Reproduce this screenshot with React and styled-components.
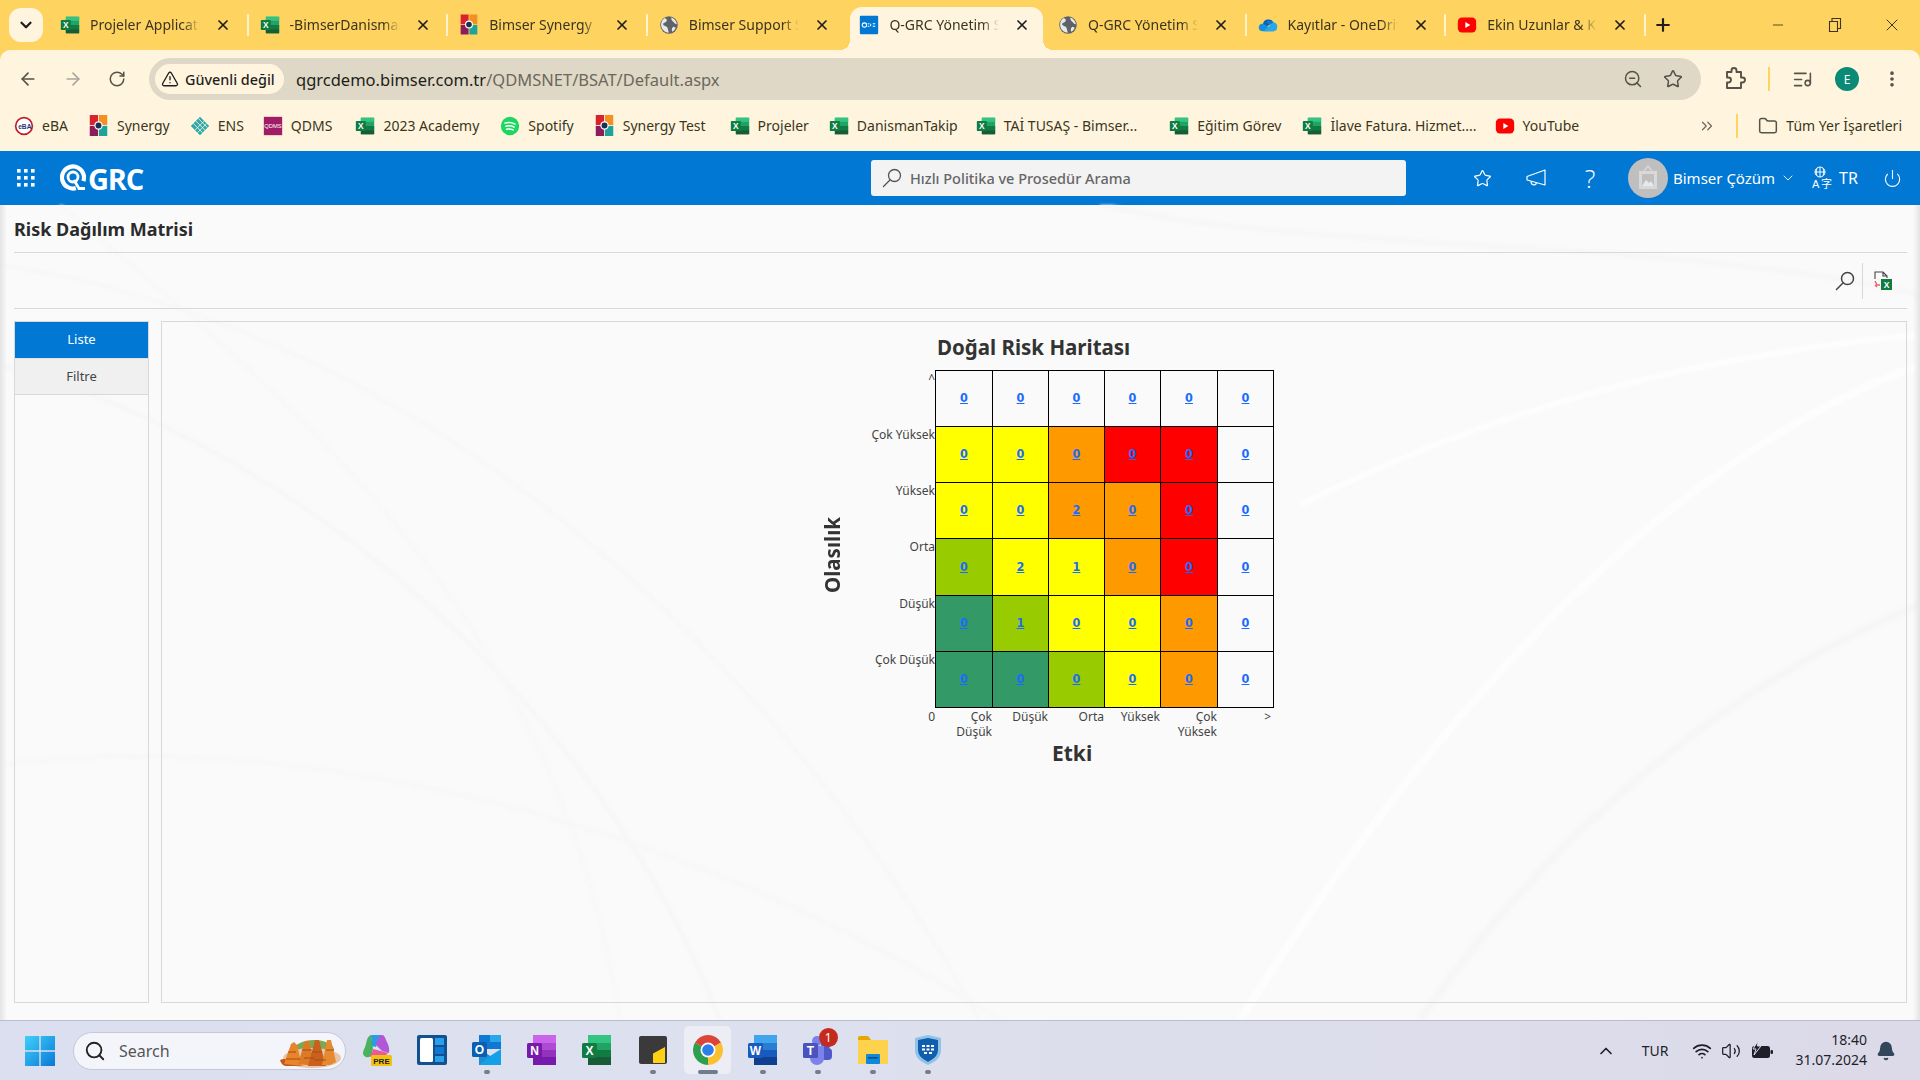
import React from "react";
import styled, { createGlobalStyle } from "styled-components";
import {
  ChevronDown, X, Plus, Minus, ArrowLeft, ArrowRight, RotateCw, TriangleAlert, ZoomOut, Star,
  ListMusic, EllipsisVertical, ChevronsRight, Folder, Search, Power,
  ChevronUp, Wifi, Volume2, Bell,
} from "lucide-react";

const UI = `"Noto Sans", "Open Sans", sans-serif`;

const Global = createGlobalStyle`
  html, body { margin: 0; padding: 0; width: 100%; height: 100%; overflow: hidden; background: #fafafa; }
  #root { width: 1920px; height: 1080px; }
  * { box-sizing: border-box; }
`;

const Screen = styled.div`
  width: 1920px; height: 1080px; display: flex; flex-direction: column; overflow: hidden;
  font-family: ${UI}; background: #ffd35f;
`;

/* ---------- browser tabs ---------- */
const TabStrip = styled.div`
  height: 50px; flex: none; display: flex; align-items: flex-end; padding-left: 9px; background: #ffd35f; position: relative;
`;
const TabMenu = styled.button`
  width: 34px; height: 34px; margin-bottom: 8px; margin-right: 6px; border: 0; border-radius: 12px; background: #fff5df;
  display: flex; align-items: center; justify-content: center; padding: 0; color: #1f1f1f;
`;
const Tab = styled.div`
  width: ${p => (p.$active ? 192.6 : 199.6)}px; height: 43px; flex: none; display: flex; align-items: center;
  margin: ${p => (p.$active ? "0 4px 0 3px" : "0")};
  padding: 0 0 8px ${p => (p.$active ? 9 : 11)}px; position: relative;
  background: ${p => (p.$active ? "#fff5df" : "transparent")};
  border-radius: ${p => (p.$active ? "12px 12px 0 0" : "0")};
  &::before {
    content: ""; position: absolute; left: -10px; bottom: 0; width: 10px; height: 10px;
    background: radial-gradient(circle at 0 0, transparent 10px, #fff5df 10px);
    display: ${p => (p.$active ? "block" : "none")};
  }
  &::after {
    content: ""; position: absolute;
    ${p => (p.$active
      ? `right: -10px; bottom: 0; width: 10px; height: 10px; background: radial-gradient(circle at 100% 0, transparent 10px, #fff5df 10px);`
      : `right: 0; top: 7px; height: 22px; width: 2px; background: #fff1cf;`)}
    display: ${p => (p.$active || p.$sep ? "block" : "none")};
  }
`;
const TabIcon = styled.span`width: 20px; height: 20px; flex: none; display: flex; align-items: center; justify-content: center;`;
const TabTitle = styled.span`
  width: 110px; margin-left: 10px; font-size: 14px; color: #3b3520; white-space: nowrap; overflow: hidden;
  -webkit-mask-image: linear-gradient(90deg, #000 85%, transparent 100%);
`;
const TabClose = styled.span`margin-left: 15px; display: flex; color: #1f1f1f;`;
const NewTab = styled.span`margin: 0 0 7px 7px; display: flex; color: #1f1f1f; align-self: flex-end; height: 36px; align-items: center;`;
const WindowButtons = styled.div`
  margin-left: auto; display: flex; height: 50px; align-self: flex-start; align-items: center; color: #3b3520;
`;
const WindowButton = styled.span`width: 57px; display: flex; justify-content: center;`;

/* ---------- address bar ---------- */
const Toolbar = styled.div`
  height: 50px; flex: none; display: flex; align-items: center; background: #fff5df; padding: 8px 0 0 18px; border-radius: 10px 10px 0 0;
`;
const NavButton = styled.span`
  width: 45px; display: flex; color: ${p => (p.$off ? "#a9a69c" : "#55524a")};
`;
const Omnibox = styled.div`
  width: 1552px; height: 42px; margin-left: -4px; border-radius: 21px; background: #e0d8c6; display: flex; align-items: center; padding: 0 6px;
`;
const SecureChip = styled.div`
  width: 129px; height: 30px; border-radius: 15px; background: #fff5df; display: flex; align-items: center; gap: 6px; padding-left: 6px;
  font-size: 14.4px; font-weight: 500; color: #1f1f1f; white-space: nowrap;
`;
const Url = styled.div`margin-left: 12px; font-size: 16.5px; color: #6c675c; white-space: nowrap;`;
const Host = styled.span`color: #201e18;`;
const OmniIcons = styled.div`margin-left: auto; display: flex; align-items: center; gap: 20px; padding-right: 12px; color: #55524a;`;
const ToolIcons = styled.div`display: flex; align-items: center; color: #55524a; margin-left: 23px;`;
const ToolSep = styled.span`width: 2px; height: 24px; background: #ffd35f; margin: 0 22px 0 22px;`;
const ProfileDot = styled.span`
  width: 24px; height: 24px; border-radius: 50%; background: #0b8a76; color: #fff; font-size: 12px; display: flex; align-items: center; justify-content: center; margin: 0 23px 0 22px;
`;

/* ---------- bookmarks ---------- */
const Bookmarks = styled.div`
  height: 51px; flex: none; display: flex; align-items: center; background: #fff5df; padding: 0 18px 0 14px; font-size: 14px; color: #3b3520;
`;
const Bookmark = styled.span`
  display: flex; align-items: center; gap: 8px; white-space: nowrap; margin-right: ${p => p.$mr}px;
`;
const MoreMarks = styled.span`margin-left: auto; display: flex; color: #6c675c;`;
const MarkSep = styled.span`width: 2px; height: 24px; background: #ffd35f; margin: 0 20px 0 20px;`;

/* ---------- app header ---------- */
const AppHeader = styled.header`
  height: 54px; flex: none; background: #0078d4; display: grid; grid-template-columns: 871px 535px 1fr; align-items: center; color: #fff;
`;
const HeaderLeft = styled.div`display: flex; align-items: center; padding-left: 17px;`;
const Logo = styled.div`display: flex; align-items: center; margin-left: 25px;`;
const LogoWord = styled.span`font: 700 29px/1 "Open Sans", sans-serif; letter-spacing: -1.2px; margin-left: 1px;`;
const SearchBox = styled.div`
  height: 36px; background: #f3f3f3; border-radius: 3px; display: flex; align-items: center; padding-left: 11px; gap: 8px;
  font-size: 14.5px; font-weight: 500; color: #666;
`;
const HeaderRight = styled.div`display: flex; align-items: center; padding-left: 49px;`;
const HeadIcon = styled.span`width: 54px; display: flex; justify-content: center;`;
const HelpMark = styled.span`font: 300 25px/1 "Open Sans", sans-serif;`;
const Avatar = styled.span`
  width: 40px; height: 40px; border-radius: 50%; background: #bfbfbf; display: flex; align-items: center; justify-content: center; margin-left: 11px;
`;
const UserName = styled.span`margin-left: 5px; font-size: 15px; white-space: nowrap; width: 107px;`;
const LangIcon = styled.span`display: flex; margin-left: 16px;`;
const LangText = styled.span`font-size: 16px; margin-left: 5px; width: 20px;`;
const PowerIcon = styled.span`display: flex; margin-left: 24px;`;

/* ---------- page ---------- */
const Content = styled.main`
  flex: 1; min-height: 0; position: relative; padding: 0 13px 17px 14px; display: flex; flex-direction: column; background: #fafafa;
`;
const Waves = styled.svg`position: absolute; inset: 0; width: 100%; height: 100%; pointer-events: none; filter: blur(1.5px);`;
const PageEdge = styled.span`
  position: absolute; top: 0; bottom: 0; width: 7px; ${p => (p.$right ? "right: 0" : "left: 0")};
  background: linear-gradient(${p => (p.$right ? "270deg" : "90deg")}, #e4e4e4, rgba(250,250,250,0));
`;
const PageTitle = styled.h1`
  position: relative; margin: 0; height: 48px; border-bottom: 1px solid #d8d8d8; display: flex; align-items: center;
  font: 700 18px/1 ${UI}; color: #2b2b2b;
`;
const ActionRow = styled.div`
  position: relative; height: 56px; border-bottom: 1px solid #d8d8d8; display: flex; justify-content: flex-end; align-items: center; padding: 0 15px 0 0;
`;
const ActionSep = styled.span`width: 1px; height: 36px; background: #d8d8d8; margin: 0 11px 0 7px;`;
const Body = styled.div`position: relative; flex: 1; min-height: 0; display: flex; gap: 12px; margin-top: 12px;`;
const SideNav = styled.nav`width: 135px; flex: none; border: 1px solid #d8d8d8; display: flex; flex-direction: column;`;
const SideItem = styled.div`
  height: ${p => (p.$active ? 36 : 37)}px; display: flex; align-items: center; justify-content: center; font-size: 13px; padding-bottom: 2px;
  background: ${p => (p.$active ? "#0078d4" : "#f0f0f0")}; color: ${p => (p.$active ? "#fff" : "#444")};
  border-bottom: ${p => (p.$active ? "0" : "1px solid #d8d8d8")};
  border-top: ${p => (p.$active ? "0" : "1px solid #e2e2e2")};
`;
const Panel = styled.section`flex: 1; border: 1px solid #d8d8d8; padding: 11px 0 0 653px;`;

/* ---------- matrix ---------- */
const Chart = styled.div`display: grid; grid-template-columns: 60px 60px 1fr; width: 460px;`;
const ChartTitle = styled.h2`
  grid-column: 3; margin: 0 0 9px 2px; font: 700 20.5px/28px ${UI}; color: #333; white-space: nowrap;
`;
const YTitle = styled.div`
  grid-column: 1; grid-row: 2; align-self: start; justify-self: center; margin-top: 147px; margin-left: -27px; height: 76px;
  writing-mode: vertical-rl; transform: rotate(180deg); font: 700 20.5px/24px ${UI}; color: #333; white-space: nowrap; text-align: center;
`;
const Matrix = styled.div`
  grid-column: 2 / 4; grid-row: 2; display: grid;
  grid-template-columns: 60px 57px 56px 56px 56px 57px 56px;
  grid-template-rows: 56px 56px 56px 57px 56px 56px auto;
`;
const YLabel = styled.span`
  font-size: 12px; line-height: 14px; color: #444; text-align: right; padding: 2px 0 0 0; white-space: nowrap; justify-self: end;
`;
const XLabel = styled.span`
  font-size: 12px; line-height: 15px; color: #444; text-align: right; padding: 2px 0 0 0;
  &:last-child { padding-right: 2px; }
`;
const Cell = styled.div`
  border: 1px solid #000; margin: 0 -1px -1px 0; background: ${p => p.$bg || "transparent"};
  display: flex; align-items: center; justify-content: center;
`;
const CellLink = styled.a`
  font: 700 12.5px/1 "DejaVu Sans Condensed", "DejaVu Sans", sans-serif; color: #1a6bff; text-decoration: underline;
`;
const XTitle = styled.div`
  grid-column: 3; margin: 0 0 0 117px; font: 700 21px/28px ${UI}; color: #333;
`;

/* ---------- taskbar ---------- */
const Taskbar = styled.footer`
  height: 60px; flex: none; display: flex; align-items: center; position: relative; border-top: 1px solid #bdbccd;
  background: linear-gradient(90deg, #dcdfef 0%, #dde0ee 40%, #dcdae9 100%); padding-left: 25px;
`;
const StartButton = styled.span`width: 30px; height: 30px; display: flex; flex: none;`;
const TaskSearch = styled.div`
  width: 273px; height: 38px; margin-left: 18px; flex: none; border-radius: 19px; background: #f4f5fb; border: 1px solid #c6c7d8;
  display: flex; align-items: center; padding-left: 10px; font-size: 16px; color: #555; gap: 13px; position: relative;
`;
const SearchArt = styled.svg`position: absolute; right: 3px; top: 3px;`;
const TaskIcons = styled.div`display: flex; margin: 0 0 2px 3px;`;
const TaskIcon = styled.span`
  width: 55.2px; height: 48px; display: flex; align-items: center; justify-content: center; position: relative; border-radius: 5px;
  &::before {
    content: ""; position: absolute; inset: 0 4px; border-radius: 5px; background: ${p => (p.$active ? "#ecedf5" : "transparent")};
  }
  &::after {
    content: ""; position: absolute; bottom: 0; left: 50%; height: 4px; border-radius: 2px; transform: translateX(-50%);
    width: ${p => (p.$active ? 20 : 6)}px; background: ${p => (p.$active ? "#6e7c8e" : "#777c88")}; display: ${p => (p.$dot || p.$active ? "block" : "none")};
  }
  & > * { position: relative; }
`;
const Badge = styled.span`
  position: absolute !important; top: 2px; right: 8px; width: 19px; height: 19px; border-radius: 50%; background: #c42b1c; color: #fff;
  font-size: 12px; display: flex; align-items: center; justify-content: center;
`;
const Tray = styled.div`margin-left: auto; display: flex; align-items: center; color: #1f1f2a; height: 100%;`;
const TrayText = styled.span`font-size: 14px; margin: 0 24px 0 26px;`;
const TrayIcons = styled.span`display: flex; align-items: center; gap: 9px;`;
const Clock = styled.div`font-size: 14px; line-height: 20px; text-align: right; margin: 0 0 2px 21px;`;
const BellWrap = styled.span`margin: 0 24px 0 9px; display: flex; color: #33475b;`;

/* ---------- small drawn icons ---------- */
const Excel = ({ s = 20 }) => (
  <svg width={s} height={s} viewBox="0 0 24 24">
    <rect x="7" y="2" width="16" height="20" rx="1" fill="#21a366" />
    <rect x="7" y="2" width="16" height="5" fill="#33c481" />
    <rect x="7" y="12" width="16" height="5" fill="#107c41" />
    <rect x="7" y="17" width="16" height="5" fill="#185c37" />
    <rect x="1" y="6" width="12" height="12" rx="1" fill="#107c41" />
    <text x="7" y="15.5" textAnchor="middle" fontSize="10" fontWeight="700" fontFamily="Liberation Sans" fill="#fff">X</text>
  </svg>
);
const Syn = ({ s = 21 }) => (
  <svg width={s} height={s} viewBox="0 0 24 24">
    <rect x="2" y="0" width="9.500" height="11.500" fill="#d8222e" />
    <rect x="12.500" y="0" width="9.500" height="11.500" fill="#f39021" />
    <rect x="2" y="12.500" width="9.500" height="11.500" fill="#8c1d5a" />
    <rect x="12.500" y="12.500" width="9.500" height="11.500" fill="#1ba39c" />
    <circle cx="12" cy="12" r="4.800" fill="#fff" />
    <circle cx="12" cy="12" r="3.400" fill="#1c2f55" />
  </svg>
);
const GlobeIco = ({ s = 20 }) => (
  <svg width={s} height={s} viewBox="0 0 24 24">
    <circle cx="12" cy="12" r="10.500" fill="#5f6368" />
    <path d="M7 3.500c3 1.500 3 3 1.500 4.500S5 9 5 11s4 2 5 4 1 4.500 2 6c-4 .5-9-3-9.500-9C2.500 8 4 5 7 3.500zM15 3c3 1 6 4 6.500 8-2 0-3-1-4-2.500S14 6 15 3zM17 14l3 1c-.5 2-2 4-4 5-1-2-1-4 1-6z" fill="#fff" opacity=".85" />
  </svg>
);
const FavGrc = ({ s = 20 }) => (
  <svg width={s} height={s} viewBox="0 0 24 24">
    <rect x="1" y="1" width="22" height="22" rx="1" fill="#0078d4" />
    <circle cx="6.500" cy="12" r="2.600" fill="none" stroke="#fff" strokeWidth="1.300" />
    <path d="M10.500 10.500h2M10.500 13.500h2M14 10.500v3M16.500 10.500h3M16.500 13.500h3" stroke="#fff" strokeWidth="1.200" />
  </svg>
);
const Cloud = ({ s = 20 }) => (
  <svg width={s} height={s} viewBox="0 0 24 24">
    <path d="M6 11a6.500 6.500 0 0 1 12-2.500 5 5 0 0 1 1 .1L10 14z" fill="#0364b8" />
    <path d="M9.500 8.500 14 12l5-3a5 5 0 0 0-4-2 6 6 0 0 0-5.500 1.500z" fill="#0f78d4" />
    <path d="M6 10.500A4.500 4.500 0 0 0 5 19.500h14L10 12.500z" fill="#1490df" />
    <path d="M18 9a4.500 4.500 0 0 1 5 5.500 5 5 0 0 1-4 5H7l9-9z" fill="#28a8ea" />
  </svg>
);
const Yt = ({ s = 20 }) => (
  <svg width={s} height={s} viewBox="0 0 24 24">
    <rect x="1" y="3" width="22" height="18" rx="5" fill="#f00" />
    <path d="M10 8.500v7l6-3.500z" fill="#fff" />
  </svg>
);
const Eba = () => (
  <svg width={20} height={20} viewBox="0 0 24 24">
    <circle cx="12" cy="12" r="10" fill="#fff" stroke="#c0202a" strokeWidth="2" />
    <text x="13" y="15" textAnchor="middle" fontSize="8" fontWeight="700" fontFamily="Liberation Sans" fill="#1c3a78">eBA</text>
  </svg>
);
const Ens = () => (
  <svg width={20} height={20} viewBox="0 0 24 24">
    <path d="M12 1 23 12 12 23 1 12z" fill="#2fa8a8" />
    <path d="M4 9l11 11M7 6l11 11M10 3l11 11M9 20 20 9M6 17 17 6" stroke="#fff5df" strokeWidth="1" />
  </svg>
);
const Qdms = () => (
  <svg width={20} height={20} viewBox="0 0 24 24">
    <rect x="1" y="1" width="22" height="22" fill="#a01c64" />
    <text x="12" y="14.500" textAnchor="middle" fontSize="7" fontFamily="Liberation Sans" fill="#fff">QDMS</text>
  </svg>
);
const Spotify = () => (
  <svg width={20} height={20} viewBox="0 0 24 24">
    <circle cx="12" cy="12" r="11" fill="#1ed760" />
    <path d="M6 8.500c4-1 8.500-.8 12 1.200M7 12.300c3.500-.8 7.200-.5 10 1M7.800 15.800c3-.6 5.700-.3 8 .9" fill="none" stroke="#fff" strokeWidth="1.800" strokeLinecap="round" />
  </svg>
);
const ExtensionIcon = () => (
  <svg width={22} height={24} viewBox="0 0 22 24" fill="none" stroke="currentColor" strokeWidth="1.900" strokeLinejoin="round">
    <path d="M3 5h4.500V3.500a2.500 2.500 0 0 1 5 0V5H17v5.500h1.500a2.500 2.500 0 0 1 0 5H17V21H3v-5.500h1.500a2.200 2.200 0 0 0 0-5H3z" />
  </svg>
);
const AppGrid = () => (
  <svg width={18} height={18} viewBox="0 0 18 18" fill="#fff">
    {[0, 7, 14].flatMap(y => [0, 7, 14].map(x => <rect key={`${x}-${y}`} x={x} y={y} width="3.600" height="3.600" />))}
  </svg>
);
const Lens = ({ s = 20, color = "#555", w = 1.300 }) => (
  <svg width={s} height={s} viewBox="0 0 20 20" fill="none" stroke={color} strokeWidth={w}>
    <circle cx="12.500" cy="7.500" r="6" />
    <path d="M8.200 11.800 1.500 18.500" strokeLinecap="round" />
  </svg>
);
const Horn = () => (
  <svg width={20} height={18} viewBox="0 0 20 18" fill="none" stroke="#fff" strokeWidth="1.200" strokeLinejoin="round">
    <path d="M19 1v15L1 11V7.500z" />
    <path d="M5 12.500c0 4 5 4.500 5.500 1" />
  </svg>
);
const LangGlyph = () => (
  <svg width={22} height={24} viewBox="0 0 22 24" fill="none" stroke="#fff" strokeWidth="1">
    <circle cx="8" cy="6" r="5" />
    <path d="M3 6h10M8 1v10M5 2.500c-1 2-1 5 0 7M11 2.500c1 2 1 5 0 7" />
    <text x="0" y="22" fontSize="11" fill="#fff" stroke="none" fontFamily="Liberation Sans">A</text>
    <text x="9" y="22" fontSize="11" fill="#fff" stroke="none" fontFamily="Noto Sans CJK SC">字</text>
  </svg>
);
const BatteryIco = () => (
  <svg width={24} height={20} viewBox="0 0 24 20">
    <rect x="2" y="5" width="18" height="12" rx="2.500" fill="#1f1f2a" />
    <rect x="20.500" y="9" width="2.500" height="4" rx="1" fill="#1f1f2a" />
    <path d="M8 0 3 8h3l-2 6 7-9H7.500z" fill="#1f1f2a" stroke="#dcdae9" strokeWidth="1" />
  </svg>
);

const Win = () => (
  <svg width={30} height={30} viewBox="0 0 30 30">
    <defs>
      <linearGradient id="wg" x1="0" y1="0" x2="1" y2="1">
        <stop offset="0" stopColor="#3fd0fb" />
        <stop offset="1" stopColor="#0a78d6" />
      </linearGradient>
    </defs>
    <path d="M0 0h14.300v14.300H0zM15.700 0H30v14.300H15.700zM0 15.700h14.300V30H0zM15.700 15.700H30V30H15.700z" fill="url(#wg)" />
  </svg>
);
const Copilot = () => (
  <svg width={32} height={36} viewBox="0 0 32 36">
    <path d="M10 3c-3 1-4 4-5 9-1 4-3 6-3 9 0 3 3 5 6 4 3-1 3-4 4-9z" fill="#49b35c" />
    <path d="M10 3h11c-2 3-4 6-6 12l-4-1z" fill="#2a9ce0" />
    <path d="M21 3c-3 0-5 5-6 10l6 6 7 2c1-5-1-9-3-13-1-3-2-5-4-5z" fill="#b257d8" />
    <path d="M12 17c4 1 9 2 15 4-2 3-7 5-11 5-3 0-6-1-8-2 2-1 3-3 4-7z" fill="#e85a9b" />
    <rect x="10" y="23" width="21" height="11" rx="1.500" fill="#f4c20d" />
    <text x="20.500" y="32" textAnchor="middle" fontSize="8" fontWeight="700" fontFamily="Liberation Sans" fill="#222">PRE</text>
  </svg>
);
const Widgets = () => (
  <svg width={30} height={30} viewBox="0 0 30 30">
    <rect width="30" height="30" rx="2" fill="#12508f" />
    <rect x="3" y="3" width="13" height="24" rx="1.500" fill="#fff" />
    <rect x="18" y="3" width="9" height="7" fill="#2aa0e8" />
    <rect x="18" y="12" width="9" height="7" fill="#0f78d4" />
    <rect x="18" y="21" width="9" height="6" fill="#2aa0e8" />
  </svg>
);
const Office = ({ letter, tile, c1, c2, c3, c4 }) => (
  <svg width={32} height={30} viewBox="0 0 32 30">
    <rect x="7" y="0" width="23" height="30" rx="1.500" fill={c2} />
    <rect x="7" y="0" width="23" height="8" fill={c1} />
    <rect x="7" y="15" width="23" height="8" fill={c3} />
    <rect x="7" y="22" width="23" height="8" fill={c4} />
    <rect x="1" y="8" width="15" height="15" rx="1.500" fill={tile} />
    <text x="8.500" y="20" textAnchor="middle" fontSize="12" fontWeight="700" fontFamily="Liberation Sans" fill="#fff">{letter}</text>
  </svg>
);
const Outlook = () => (
  <svg width={32} height={30} viewBox="0 0 32 30">
    <rect x="8" y="0" width="22" height="14" fill="#0f78d4" />
    <rect x="19" y="0" width="11" height="7" fill="#28a8ea" />
    <path d="M8 14l11 7 11-7v16H8z" fill="#14a0e6" />
    <path d="M8 14l11 7-11 9z" fill="#1b8ed8" />
    <rect x="1" y="7" width="15" height="15" rx="1.500" fill="#0a5fb0" />
    <text x="8.500" y="19" textAnchor="middle" fontSize="12" fontWeight="700" fontFamily="Liberation Sans" fill="#fff">O</text>
  </svg>
);
const Sticky = () => (
  <svg width={28} height={28} viewBox="0 0 28 28">
    <rect width="28" height="28" rx="2" fill="#3a3a3a" />
    <path d="M14 27V18q0-1 1-1l11-6v16z" fill="#fcd116" />
  </svg>
);
const sector = (a, b, r = 15) => {
  const p = t => [15 + r * Math.cos((t * Math.PI) / 180), 15 + r * Math.sin((t * Math.PI) / 180)];
  const [x1, y1] = p(a), [x2, y2] = p(b);
  return `M15 15L${x1.toFixed(2)} ${y1.toFixed(2)}A${r} ${r} 0 0 1 ${x2.toFixed(2)} ${y2.toFixed(2)}Z`;
};
const Chrome = () => (
  <svg width={30} height={30} viewBox="0 0 30 30">
    <path d={sector(-150, -30)} fill="#db4437" />
    <path d={sector(-30, 90)} fill="#fbc02d" />
    <path d={sector(90, 210)} fill="#2e9e4f" />
    <circle cx="15" cy="15" r="7.500" fill="#fff" />
    <circle cx="15" cy="15" r="5.800" fill="#2f7de9" />
  </svg>
);
const Teams = () => (
  <svg width={32} height={32} viewBox="0 0 32 32">
    <circle cx="24" cy="10" r="5" fill="#5059c9" />
    <rect x="19" y="14" width="11" height="12" rx="4" fill="#5059c9" />
    <circle cx="15" cy="7" r="5" fill="#7b83eb" />
    <path d="M8 12h14v12a7 7 0 0 1-14 0z" fill="#7b83eb" />
    <rect x="1" y="9" width="15" height="15" rx="1.500" fill="#4b53bc" />
    <text x="8.500" y="21" textAnchor="middle" fontSize="12" fontWeight="700" fontFamily="Liberation Sans" fill="#fff">T</text>
  </svg>
);
const Explorer = () => (
  <svg width={30} height={28} viewBox="0 0 30 28">
    <path d="M0 2q0-2 2-2h8l3 4H0z" fill="#e6a800" />
    <rect y="4" width="30" height="24" rx="1" fill="#ffd24d" />
    <rect x="8" y="18" width="14" height="10" rx="1" fill="#0f8ad8" />
    <rect x="10" y="21" width="10" height="1.600" fill="#0a4f8c" />
  </svg>
);
const Shield = () => (
  <svg width={26} height={30} viewBox="0 0 26 30">
    <path d="M13 0 26 3v12c0 8-6 12-13 15C6 27 0 23 0 15V3z" fill="#8fc4e6" />
    <path d="M13 3 23 5v10c0 6-5 9-10 12C8 24 3 21 3 15V5z" fill="#0f5fae" />
    <path d="M7 11h3M11.500 11h3M16 11h3M7 14.500h3M11.500 14.500h3M16 14.500h3M9 18h3M14 18h3" stroke="#fff" strokeWidth="2" />
  </svg>
);
const Carrots = () => (
  <SearchArt width={64} height={32} viewBox="0 0 64 32">
    <ellipse cx="36" cy="14" rx="20" ry="10" fill="#7fa650" />
    <ellipse cx="34" cy="22" rx="29" ry="10" fill="#e8c4a8" />
    <path d="M2 24c8-4 14 4 24 6H8c-3 0-5-3-6-6z" fill="#c2571c" />
    <path d="M6 28 13 8l3-2 3 3 5 21z" fill="#e8842a" />
    <path d="M20 28 27 5h4l6 25z" fill="#dd7a25" />
    <path d="M30 30l7-26h4l7 26z" fill="#c9601c" />
    <path d="M44 29l5-25h4l5 22-6 3z" fill="#e58a30" />
    <path d="M10 16h8M24 14h10M34 16h10M48 14h8M8 23h14M26 22h10M36 24h12" stroke="#a84c14" strokeWidth="1.200" />
  </SearchArt>
);
const QMark = () => (
  <svg width={27} height={30} viewBox="0 0 27 30">
    <circle cx="13" cy="14.500" r="11" fill="none" stroke="#fff" strokeWidth="4.200" strokeDasharray="58 11" transform="rotate(75 13 14.500)" />
    <circle cx="13" cy="14" r="5" fill="none" stroke="#fff" strokeWidth="2.800" />
    <path d="M14 17 L19 25.500 H25" fill="none" stroke="#fff" strokeWidth="2.800" />
  </svg>
);
const Picture = () => (
  <svg width={22} height={26} viewBox="0 0 22 26">
    <path d="M7 6 11 1l4 5" fill="none" stroke="#d9d9d9" strokeWidth="1.300" />
    <rect x="2" y="6" width="18" height="18" fill="#d9d9d9" />
    <rect x="5" y="9" width="12" height="12" fill="#bfbfbf" />
    <path d="M5 21l4-6 3 3 2-2 3 5z" fill="#e8e8e8" />
  </svg>
);
const ExportXls = () => (
  <svg width={18} height={19} viewBox="0 0 18 19">
    <path d="M1 8V1h8l4 4v2M9 1v4h4" fill="none" stroke="#444" strokeWidth="1.100" />
    <path d="M1 10l2 4h3M3 16l-2-2" fill="none" stroke="#f0606a" strokeWidth="1.400" />
    <rect x="7" y="8" width="11" height="11" fill="#107c41" />
    <text x="12.500" y="17" textAnchor="middle" fontSize="8.500" fontWeight="700" fontFamily="Liberation Sans" fill="#fff">X</text>
  </svg>
);

const tabs = [
  { icon: <Excel />, title: "Projeler Application", sep: true },
  { icon: <Excel />, title: "-BimserDanismanlik", sep: true },
  { icon: <Syn />, title: "Bimser Synergy", sep: true },
  { icon: <GlobeIco />, title: "Bimser Support System" },
  { icon: <FavGrc />, title: "Q-GRC Yönetim Sistemi", active: true },
  { icon: <GlobeIco />, title: "Q-GRC Yönetim Sistemi", sep: true },
  { icon: <Cloud />, title: "Kayıtlar - OneDrive", sep: true },
  { icon: <Yt />, title: "Ekin Uzunlar & Kerem", sep: true },
];

const marks = [
  { icon: <Eba />, text: "eBA", mr: 20 },
  { icon: <Syn />, text: "Synergy", mr: 20 },
  { icon: <Ens />, text: "ENS", mr: 19 },
  { icon: <Qdms />, text: "QDMS", mr: 23 },
  { icon: <Excel />, text: "2023 Academy", mr: 21 },
  { icon: <Spotify />, text: "Spotify", mr: 20 },
  { icon: <Syn />, text: "Synergy Test", mr: 24 },
  { icon: <Excel />, text: "Projeler", mr: 20 },
  { icon: <Excel />, text: "DanismanTakip", mr: 18 },
  { icon: <Excel />, text: "TAİ TUSAŞ - Bimser...", mr: 32 },
  { icon: <Excel />, text: "Eğitim Görev", mr: 21 },
  { icon: <Excel />, text: "İlave Fatura. Hizmet....", mr: 18 },
  { icon: <Yt />, text: "YouTube", mr: 20 },
];

const W = "#fafafa00";
const Y = "#ffff00";
const O = "#ff9900";
const R = "#ff0000";
const G = "#99cc00";
const D = "#339966";
const rows = [
  { label: "^", cells: [[W, 0], [W, 0], [W, 0], [W, 0], [W, 0], [W, 0]] },
  { label: "Çok Yüksek", cells: [[Y, 0], [Y, 0], [O, 0], [R, 0], [R, 0], [W, 0]] },
  { label: "Yüksek", cells: [[Y, 0], [Y, 0], [O, 2], [O, 0], [R, 0], [W, 0]] },
  { label: "Orta", cells: [[G, 0], [Y, 2], [Y, 1], [O, 0], [R, 0], [W, 0]] },
  { label: "Düşük", cells: [[D, 0], [G, 1], [Y, 0], [Y, 0], [O, 0], [W, 0]] },
  { label: "Çok Düşük", cells: [[D, 0], [D, 0], [G, 0], [Y, 0], [O, 0], [W, 0]] },
];
const xLabels = ["0", "Çok Düşük", "Düşük", "Orta", "Yüksek", "Çok Yüksek", ">"];

export default function App() {
  return (
    <Screen>
      <Global />
      <TabStrip>
        <TabMenu><ChevronDown size={18} strokeWidth={3} /></TabMenu>
        {tabs.map((t, i) => (
          <Tab key={i} $active={t.active} $sep={t.sep}>
            <TabIcon>{t.icon}</TabIcon>
            <TabTitle>{t.title}</TabTitle>
            <TabClose><X size={16} strokeWidth={2.6} /></TabClose>
          </Tab>
        ))}
        <NewTab><Plus size={20} strokeWidth={2.6} /></NewTab>
        <WindowButtons>
          <WindowButton><Minus size={16} strokeWidth={1.3} /></WindowButton>
          <WindowButton>
            <svg width="14" height="16" viewBox="0 0 14 16"><path d="M1.500 4.500h8v10h-8zM4 4.500V1.500h8.500v10H9.500" fill="none" stroke="currentColor" strokeWidth="1.100" /></svg>
          </WindowButton>
          <WindowButton><X size={20} strokeWidth={1.2} /></WindowButton>
        </WindowButtons>
      </TabStrip>

      <Toolbar>
        <NavButton><ArrowLeft size={20} strokeWidth={2} /></NavButton>
        <NavButton $off><ArrowRight size={20} strokeWidth={2} /></NavButton>
        <NavButton><RotateCw size={18} strokeWidth={2} /></NavButton>
        <Omnibox>
          <SecureChip>
            <TriangleAlert size={18} strokeWidth={1.8} />
            Güvenli değil
          </SecureChip>
          <Url><Host>qgrcdemo.bimser.com.tr</Host>/QDMSNET/BSAT/Default.aspx</Url>
          <OmniIcons>
            <ZoomOut size={20} strokeWidth={1.8} />
            <Star size={20} strokeWidth={1.8} />
          </OmniIcons>
        </Omnibox>
        <ToolIcons>
          <ExtensionIcon />
          <ToolSep />
          <ListMusic size={21} strokeWidth={1.8} />
          <ProfileDot>E</ProfileDot>
          <EllipsisVertical size={20} strokeWidth={2.4} />
        </ToolIcons>
      </Toolbar>

      <Bookmarks>
        {marks.map(m => (
          <Bookmark key={m.text} $mr={m.mr}>{m.icon}{m.text}</Bookmark>
        ))}
        <MoreMarks><ChevronsRight size={18} strokeWidth={1.6} /></MoreMarks>
        <MarkSep />
        <Bookmark $mr={0}><Folder size={20} strokeWidth={1.8} color="#55524a" />Tüm Yer İşaretleri</Bookmark>
      </Bookmarks>

      <AppHeader>
        <HeaderLeft>
          <AppGrid />
          <Logo>
            <QMark />
            <LogoWord>GRC</LogoWord>
          </Logo>
        </HeaderLeft>
        <SearchBox>
          <Lens />
          Hızlı Politika ve Prosedür Arama
        </SearchBox>
        <HeaderRight>
          <HeadIcon><Star size={19} strokeWidth={1.5} /></HeadIcon>
          <HeadIcon><Horn /></HeadIcon>
          <HeadIcon><HelpMark>?</HelpMark></HeadIcon>
          <Avatar><Picture /></Avatar>
          <UserName>Bimser Çözüm</UserName>
          <ChevronDown size={16} strokeWidth={1.3} />
          <LangIcon><LangGlyph /></LangIcon>
          <LangText>TR</LangText>
          <PowerIcon><Power size={19} strokeWidth={1.4} /></PowerIcon>
        </HeaderRight>
      </AppHeader>

      <Content>
        <Waves viewBox="0 0 1920 815" preserveAspectRatio="none" fill="none">
          <path d="M0 160C300 240 600 500 720 815" stroke="#f6f6f6" strokeWidth="4" />
          <path d="M0 60C400 120 760 420 980 815" stroke="#f6f6f6" strokeWidth="3" />
          <path d="M60 0C300 200 560 420 620 815" stroke="#f7f7f7" strokeWidth="3" />
          <path d="M0 560C300 520 700 620 1000 815" stroke="#f7f7f7" strokeWidth="5" />
          <path d="M1240 815C1400 560 1640 260 1920 160" stroke="#fdfdfd" strokeWidth="8" />
          <path d="M1420 815C1540 640 1720 480 1920 400" stroke="#f6f6f6" strokeWidth="8" />
          <path d="M1100 0C1320 50 1660 30 1920 90" stroke="#f6f6f6" strokeWidth="5" />
          <path d="M1300 300C1500 200 1700 150 1920 130" stroke="#fdfdfd" strokeWidth="6" />
        </Waves>
        <PageEdge />
        <PageEdge $right />
        <PageTitle>Risk Dağılım Matrisi</PageTitle>
        <ActionRow>
          <Lens s={20} color="#444" w={1.500} />
          <ActionSep />
          <ExportXls />
        </ActionRow>
        <Body>
          <SideNav>
            <SideItem $active>Liste</SideItem>
            <SideItem>Filtre</SideItem>
          </SideNav>
          <Panel>
            <Chart>
              <ChartTitle>Doğal Risk Haritası</ChartTitle>
              <YTitle>Olasılık</YTitle>
              <Matrix>
                {rows.map(r => (
                  <React.Fragment key={r.label}>
                    <YLabel>{r.label}</YLabel>
                    {r.cells.map(([bg, n], i) => (
                      <Cell key={i} $bg={bg}><CellLink href="#">{n}</CellLink></Cell>
                    ))}
                  </React.Fragment>
                ))}
                {xLabels.map(l => <XLabel key={l}>{l}</XLabel>)}
              </Matrix>
              <XTitle>Etki</XTitle>
            </Chart>
          </Panel>
        </Body>
      </Content>

      <Taskbar>
        <StartButton><Win /></StartButton>
        <TaskSearch>
          <Search size={22} strokeWidth={2} color="#222" />
          Search
          <Carrots />
        </TaskSearch>
        <TaskIcons>
          <TaskIcon><Copilot /></TaskIcon>
          <TaskIcon><Widgets /></TaskIcon>
          <TaskIcon $dot><Outlook /></TaskIcon>
          <TaskIcon><Office letter="N" tile="#7719aa" c1="#ca64ea" c2="#ae4bd5" c3="#9332bf" c4="#7719aa" /></TaskIcon>
          <TaskIcon><Office letter="X" tile="#107c41" c1="#33c481" c2="#21a366" c3="#107c41" c4="#185c37" /></TaskIcon>
          <TaskIcon $dot><Sticky /></TaskIcon>
          <TaskIcon $active><Chrome /></TaskIcon>
          <TaskIcon $dot><Office letter="W" tile="#185abd" c1="#41a5ee" c2="#2b7cd3" c3="#185abd" c4="#103f91" /></TaskIcon>
          <TaskIcon $dot><Teams /><Badge>1</Badge></TaskIcon>
          <TaskIcon $dot><Explorer /></TaskIcon>
          <TaskIcon $dot><Shield /></TaskIcon>
        </TaskIcons>
        <Tray>
          <ChevronUp size={20} strokeWidth={2} />
          <TrayText>TUR</TrayText>
          <TrayIcons>
            <Wifi size={20} strokeWidth={2} />
            <Volume2 size={20} strokeWidth={1.5} />
            <BatteryIco />
          </TrayIcons>
          <Clock>18:40<br />31.07.2024</Clock>
          <BellWrap><Bell size={20} fill="currentColor" /></BellWrap>
        </Tray>
      </Taskbar>
    </Screen>
  );
}
